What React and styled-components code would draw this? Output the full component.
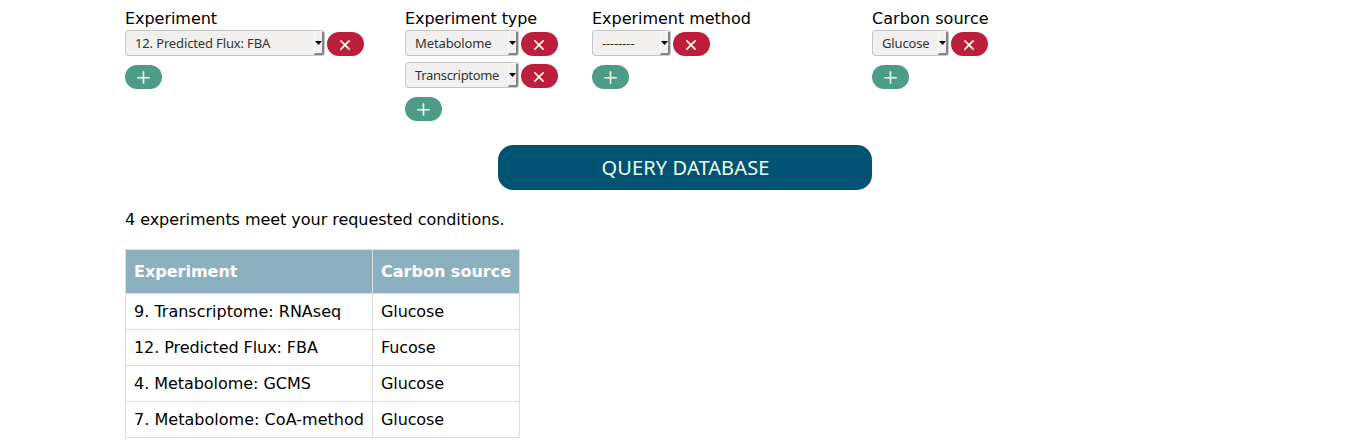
import React from "react";
import styled, { createGlobalStyle } from "styled-components";

const GlobalStyle = createGlobalStyle`
  * { box-sizing: border-box; }
  body {
    margin: 0;
    background: #fff;
    color: #000;
    font: 16px/19px "DejaVu Sans", sans-serif;
  }
`;

const Page = styled.main`
  width: 1351px;
  height: 448px;
  padding: 9px 125px 0;
  overflow: hidden;
`;

const Filters = styled.section`
  display: grid;
  grid-template-columns: 280px 187px 280px 1fr;
  height: 136px;
`;

const FilterColumn = styled.div`
  display: flex;
  flex-direction: column;
  align-items: flex-start;
`;

const FilterLabel = styled.div`
  height: 21px;
  letter-spacing: ${(p) => p.$spacing}px;
  white-space: nowrap;
`;

const FilterRow = styled.div`
  display: flex;
  align-items: flex-start;
  gap: 2px;
  height: 32px;
`;

const Select = styled.div`
  display: flex;
  justify-content: space-between;
  width: ${(p) => p.$width}px;
  height: 26px;
  padding-left: 9px;
  border: 1px solid #c6c6c6;
  border-radius: 3px;
  background: #f1f0ef;
  color: #333;
  font: 13px/25px "Noto Sans", sans-serif;
  letter-spacing: ${(p) => p.$spacing}px;
  white-space: nowrap;
`;

const SelectArrow = styled.span`
  display: flex;
  flex: none;
  align-items: center;
  justify-content: center;
  width: 10px;
  height: 24px;
  border: solid;
  border-width: 1px 2px 2px 1px;
  border-color: #f8f8f8 #858585 #858585 #fafafa;
  border-radius: 0 2px 2px 0;
  background: #f1f0ef;
`;

const RoundButton = styled.button`
  display: flex;
  align-items: center;
  justify-content: center;
  width: 37px;
  height: 24px;
  margin: ${(p) => (p.$add ? "3px" : "2px")} 0 0;
  padding: 1px ${(p) => (p.$add ? 0 : 1)}px 0 0;
  border: 0;
  border-radius: 12px;
  background: ${(p) => (p.$add ? "#4d9c88" : "#be1e3c")};
  color: #f0ffe6;
`;

const QueryButton = styled.button`
  display: block;
  width: 374px;
  height: 45px;
  margin: 0 0 0 373px;
  padding: 1px 0 0 1px;
  border: 0;
  border-radius: 15px;
  background: #005374;
  color: #f0ffe6;
  font: 20px/44px "Noto Sans", sans-serif;
  letter-spacing: 0.12px;
`;

const Summary = styled.p`
  margin: 20px 0;
  letter-spacing: -0.045px;
`;

const Table = styled.table`
  border-collapse: collapse;
  white-space: nowrap;
`;

const HeaderCell = styled.th`
  width: ${(p) => p.$width}px;
  height: 44px;
  padding: 0 8px;
  border: 1px solid #ddd;
  background: #8cb0c0;
  color: #fff;
  text-align: left;
`;

const Cell = styled.td`
  height: 36px;
  padding: 0 8px;
  border: 1px solid #ddd;
  letter-spacing: ${(p) => p.$spacing}px;
`;

const filters = [
  { label: "Experiment", spacing: -0.04, width: 200, values: [["12. Predicted Flux: FBA", -0.14]] },
  { label: "Experiment type", spacing: -0.08, width: 114, values: [["Metabolome", -0.12], ["Transcriptome", -0.32]] },
  { label: "Experiment method", spacing: -0.03, width: 79, values: [["--------", -0.13]] },
  { label: "Carbon source", spacing: 0.06, width: 77, values: [["Glucose", -0.15]] },
];

const results = [
  { name: "9. Transcriptome: RNAseq", nameSpacing: 0.01, source: "Glucose" },
  { name: "12. Predicted Flux: FBA", nameSpacing: -0.08, source: "Fucose" },
  { name: "4. Metabolome: GCMS", nameSpacing: -0.05, source: "Glucose" },
  { name: "7. Metabolome: CoA-method", nameSpacing: 0.03, source: "Glucose" },
];

function Dropdown({ width, text, spacing }) {
  return (
    <Select $width={width} $spacing={spacing}>
      <span>{text}</span>
      <SelectArrow>
        <svg width="7" height="4" viewBox="0 0 7 4">
          <path d="M0 0h7L3.5 4z" fill="#000" />
        </svg>
      </SelectArrow>
    </Select>
  );
}

function Cross() {
  return (
    <svg width="12" height="12" viewBox="0 0 12 12" fill="none" stroke="currentColor" strokeWidth="1.7">
      <path d="M1.4 1.4l9.2 9.2M10.6 1.4L1.4 10.6" />
    </svg>
  );
}

function Plus() {
  return (
    <svg width="13" height="13" viewBox="0 0 13 13" fill="none" stroke="currentColor" strokeWidth="1.6">
      <path d="M6.5 0.3v12.4M0.2 6.7h12.6" />
    </svg>
  );
}

export default function App() {
  return (
    <Page>
      <GlobalStyle />
      <Filters>
        {filters.map((f) => (
          <FilterColumn key={f.label}>
            <FilterLabel $spacing={f.spacing}>{f.label}</FilterLabel>
            {f.values.map(([text, spacing]) => (
              <FilterRow key={text}>
                <Dropdown width={f.width} text={text} spacing={spacing} />
                <RoundButton aria-label="Remove"><Cross /></RoundButton>
              </FilterRow>
            ))}
            <RoundButton $add aria-label="Add"><Plus /></RoundButton>
          </FilterColumn>
        ))}
      </Filters>
      <QueryButton>QUERY DATABASE</QueryButton>
      <Summary>4 experiments meet your requested conditions.</Summary>
      <Table>
        <thead>
          <tr>
            <HeaderCell $width={247}>Experiment</HeaderCell>
            <HeaderCell $width={147}>Carbon source</HeaderCell>
          </tr>
        </thead>
        <tbody>
          {results.map((r) => (
            <tr key={r.name}>
              <Cell $spacing={r.nameSpacing}>{r.name}</Cell>
              <Cell $spacing={-0.12}>{r.source}</Cell>
            </tr>
          ))}
        </tbody>
      </Table>
    </Page>
  );
}
